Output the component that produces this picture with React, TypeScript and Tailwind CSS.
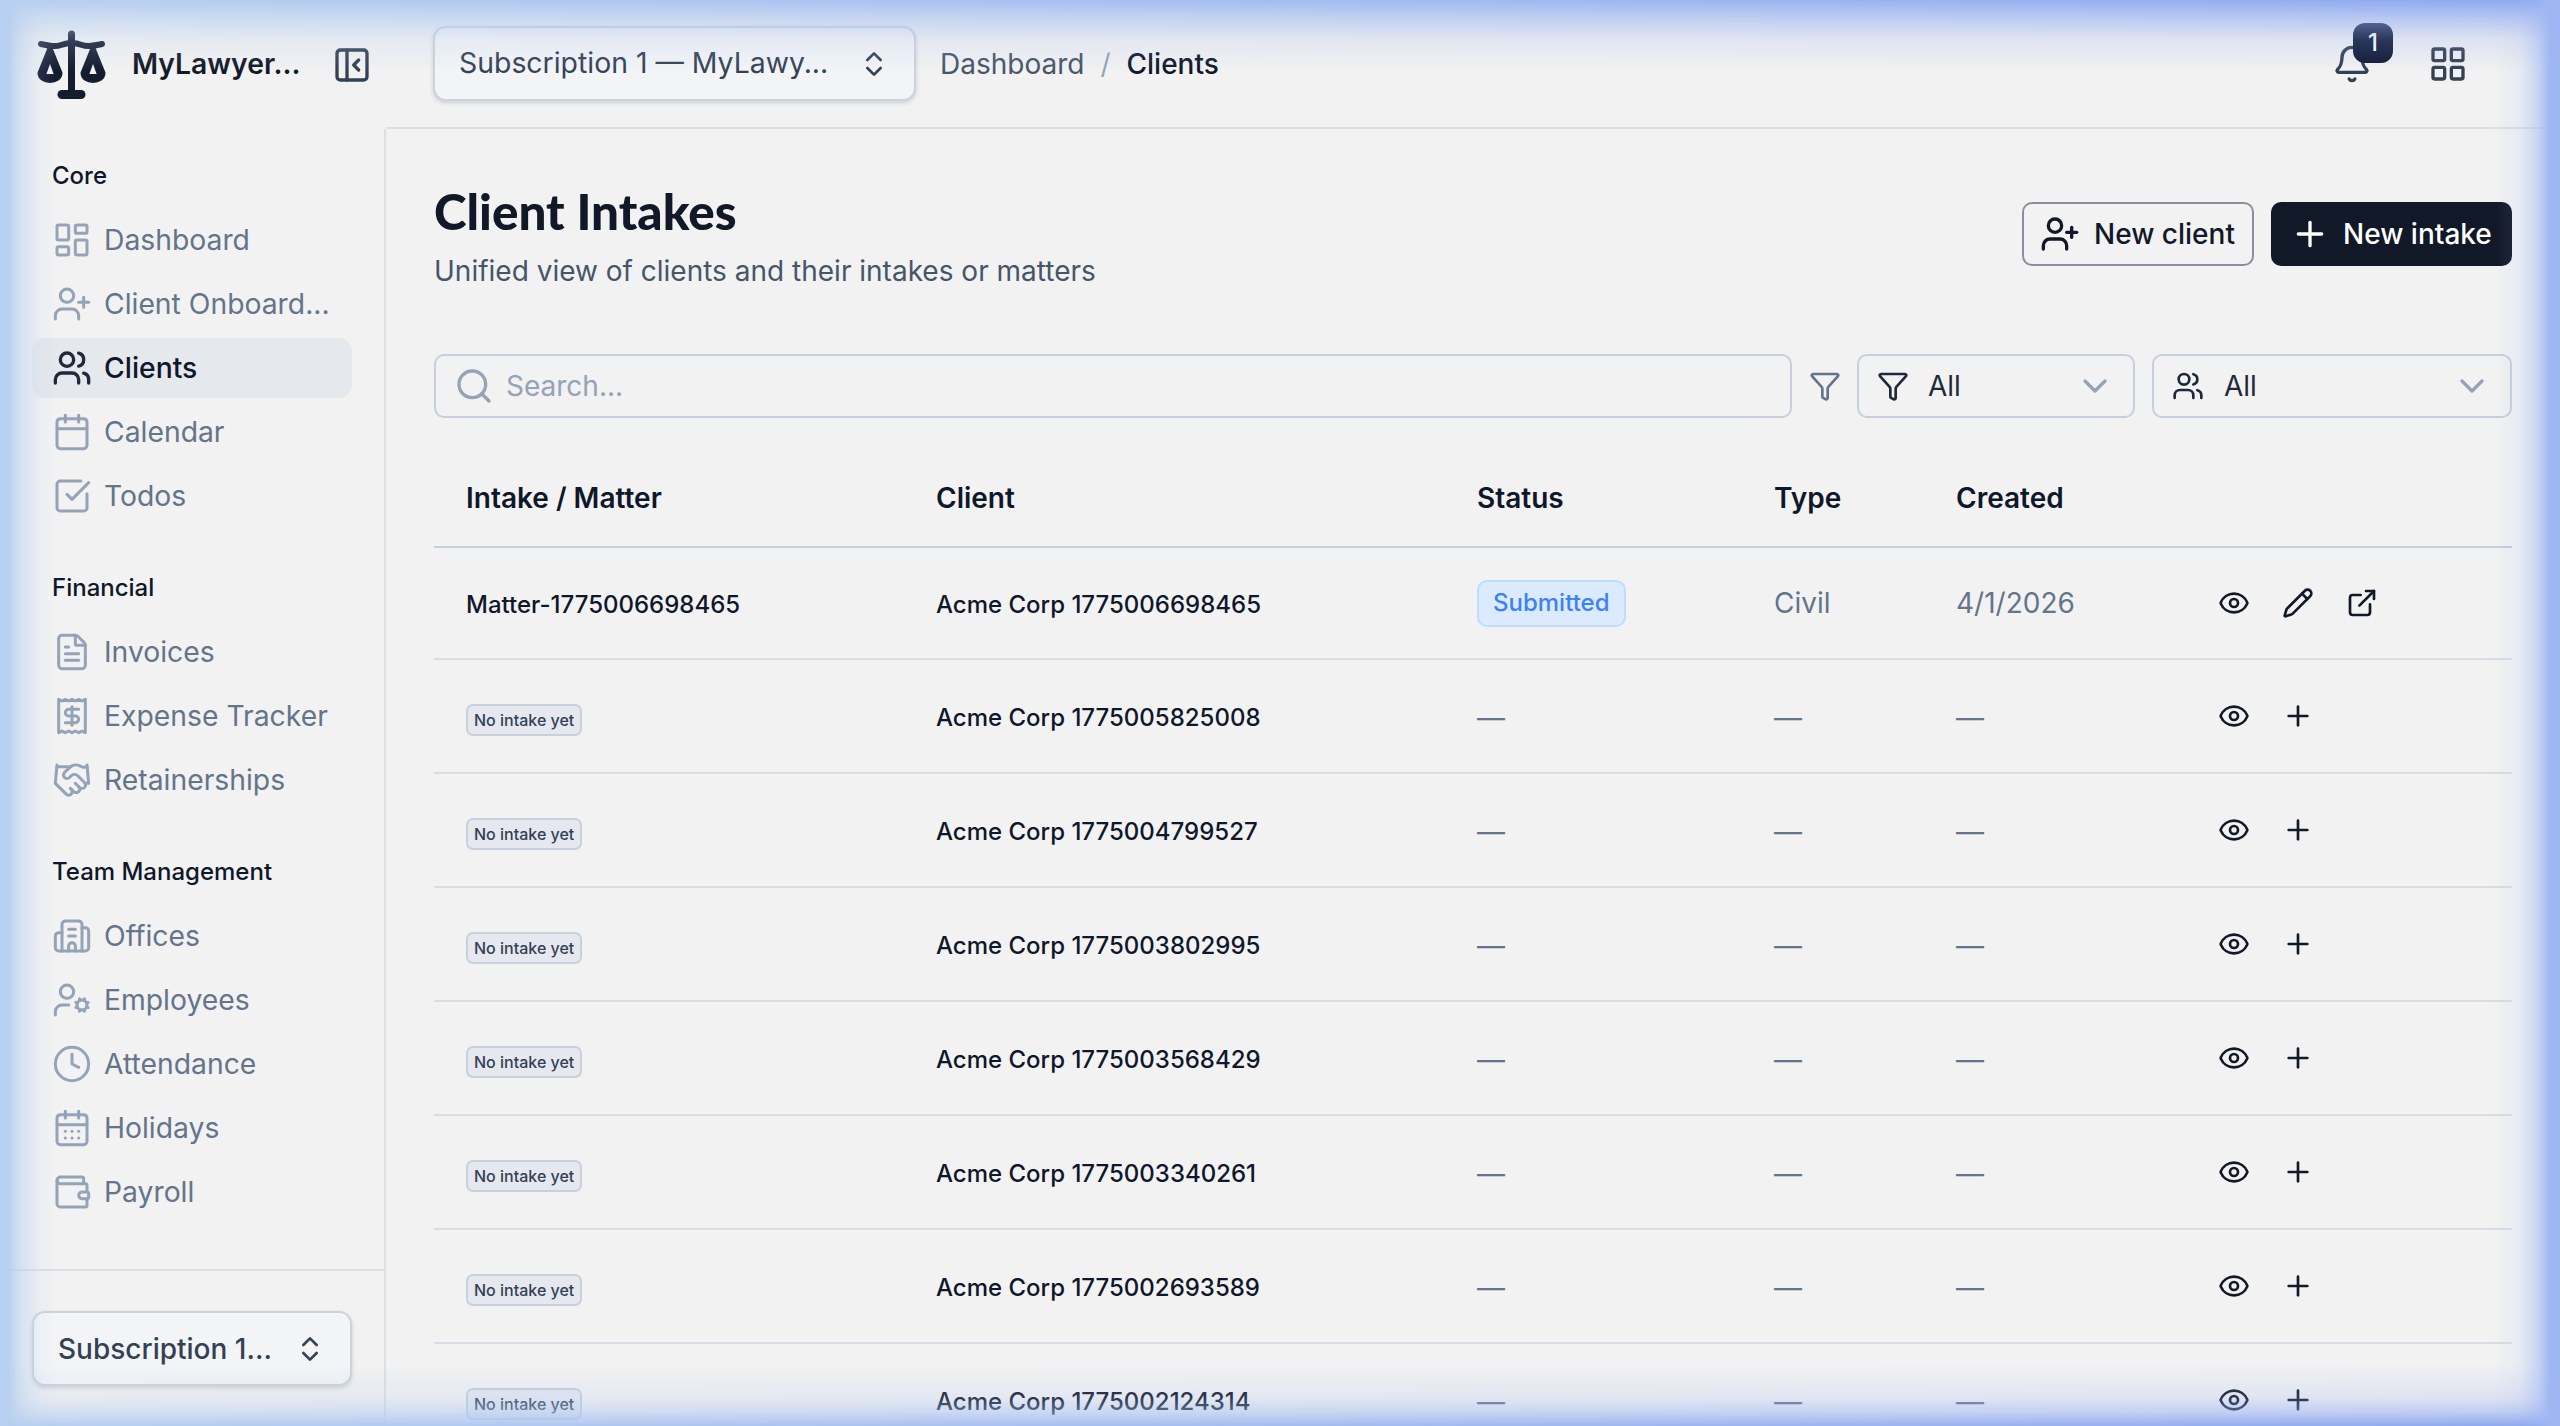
import type { ReactNode } from "react";
import {
  Bell,
  Building2,
  Calendar,
  CalendarDays,
  ChevronDown,
  ChevronsUpDown,
  Clock,
  ExternalLink,
  Eye,
  FileText,
  Funnel,
  Handshake,
  LayoutDashboard,
  LayoutGrid,
  PanelLeftClose,
  Pencil,
  Plus,
  Receipt,
  Search,
  SquareCheckBig,
  UserCog,
  UserPlus,
  Users,
  Wallet,
  type LucideIcon,
} from "lucide-react";

type NavItem = { label: string; icon: LucideIcon; active?: boolean };

const navGroups: { title: string; items: NavItem[] }[] = [
  {
    title: "Core",
    items: [
      { label: "Dashboard", icon: LayoutDashboard },
      { label: "Client Onboard...", icon: UserPlus },
      { label: "Clients", icon: Users, active: true },
      { label: "Calendar", icon: Calendar },
      { label: "Todos", icon: SquareCheckBig },
    ],
  },
  {
    title: "Financial",
    items: [
      { label: "Invoices", icon: FileText },
      { label: "Expense Tracker", icon: Receipt },
      { label: "Retainerships", icon: Handshake },
    ],
  },
  {
    title: "Team Management",
    items: [
      { label: "Offices", icon: Building2 },
      { label: "Employees", icon: UserCog },
      { label: "Attendance", icon: Clock },
      { label: "Holidays", icon: CalendarDays },
      { label: "Payroll", icon: Wallet },
    ],
  },
];

const emptyClients = [
  "Acme Corp 1775005825008",
  "Acme Corp 1775004799527",
  "Acme Corp 1775003802995",
  "Acme Corp 1775003568429",
  "Acme Corp 1775003340261",
  "Acme Corp 1775002693589",
  "Acme Corp 1775002124314",
];

function ScalesLogo() {
  return (
    <svg width="72" height="72" viewBox="0 0 72 72" className="text-[#141c30]" fill="none" stroke="currentColor" strokeLinecap="round" strokeLinejoin="round">
      <path d="M35.5 5v58" strokeWidth="7" />
      <path d="M26 65.5h19" strokeWidth="9" />
      <path d="M5 15c9 2 14 3 20 1s7-2 10.5-2 5 0 10.5 2 11 1 20-1" strokeWidth="6" />
      <path d="M14 18 3.5 44c0 5 5 8 10.5 8s10.5-3 10.5-8Z M14 29 7.5 47h13Z" fill="currentColor" fillRule="evenodd" strokeWidth="4" />
      <path d="M57 18 46.5 44c0 5 5 8 10.5 8s10.5-3 10.5-8Z M57 29 50.5 47h13Z" fill="currentColor" fillRule="evenodd" strokeWidth="4" />
    </svg>
  );
}

function SelectButton({ children, className }: { children: ReactNode; className: string }) {
  return (
    <button className={`flex items-center justify-between rounded-[13px] border-2 border-[#cdd3de] bg-[#f3f4f6] text-[#334155] shadow-[0_2px_4px_rgba(15,23,42,0.16)] ${className}`}>
      {children}
    </button>
  );
}

function Sidebar() {
  return (
    <aside className="flex w-[386px] shrink-0 flex-col">
      <div className="flex h-[129px] shrink-0 items-center pl-[36px]">
        <ScalesLogo />
        <span className="ml-[24px] text-[28.3px] font-semibold text-[#111827]">MyLawyer...</span>
        <PanelLeftClose size={40} className="ml-auto mr-[14px] text-[#334155]" />
      </div>
      <div className="flex min-h-0 flex-1 flex-col border-r-2 border-[#dcdfe6]">
        <nav className="flex-1 px-[32px] pt-[27px]">
          {navGroups.map((group) => (
            <div key={group.title} className="mb-[42px]">
              <div className="flex h-[40px] items-center pl-[20px] text-[24px] font-medium text-[#0f172a]">{group.title}</div>
              <ul className="mt-[14px] flex flex-col gap-[4px]">
                {group.items.map((item) => (
                  <li
                    key={item.label}
                    className={`flex h-[60px] items-center gap-[12px] rounded-[13px] pl-[20px] text-[28.3px] ${
                      item.active ? "bg-[#e5e8ec] font-medium text-[#0f172a]" : "text-[#64748b]"
                    }`}
                  >
                    <item.icon size={40} strokeWidth={item.active ? 2 : 1.8} className={item.active ? "text-[#1e293b]" : "text-[#94a3b8]"} />
                    <span>{item.label}</span>
                  </li>
                ))}
              </ul>
            </div>
          ))}
        </nav>
        <div className="shrink-0 border-t-2 border-[#dcdfe6] px-[32px] pb-[40px] pt-[40px]">
          <SelectButton className="h-[75px] w-full pl-[24px] pr-[24px] text-[28px] font-medium">
            <span>Subscription 1...</span>
            <ChevronsUpDown size={32} />
          </SelectButton>
        </div>
      </div>
    </aside>
  );
}

function Header() {
  return (
    <header className="flex h-[129px] shrink-0 items-center border-b-2 border-[#dcdfe6] pl-[47px] pr-[48px]">
      <SelectButton className="h-[75px] w-[483px] pl-[24px] pr-[24px] text-[28.4px]">
        <span>Subscription 1 — MyLawy...</span>
        <ChevronsUpDown size={32} />
      </SelectButton>
      <div className="ml-[24px] flex items-center text-[28px] text-[#475569]">
        <span>Dashboard</span>
        <span className="mx-[16px] text-[#94a3b8]">/</span>
        <span className="font-medium text-[#0f172a]">Clients</span>
      </div>
      <div className="relative ml-auto flex items-center gap-[56px] pr-[44px]">
        <div className="relative">
          <Bell size={40} className="text-[#334155]" />
          <span className="absolute left-[21px] top-[-21px] flex h-[40px] w-[40px] items-center justify-center rounded-[12px] bg-[#111a33] text-[24px] font-medium text-white">1</span>
        </div>
        <LayoutGrid size={40} className="text-[#334155]" />
      </div>
    </header>
  );
}

function ActionIcons({ children }: { children: ReactNode }) {
  return (
    <div className="flex items-center gap-[32px] text-[#111827]">
      <Eye size={32} />
      {children}
    </div>
  );
}

const cellBase = "px-[32px] align-middle";
const textCell = "px-[32px] pt-[3px] align-middle";
const dashCell = "px-[32px] pt-[3px] align-middle text-[28px] font-normal text-[#64748b]";

function ClientsTable() {
  return (
    <table className="w-full table-fixed border-collapse text-[24px] font-medium">
      <colgroup>
        <col className="w-[470px]" />
        <col className="w-[541px]" />
        <col className="w-[297px]" />
        <col className="w-[182px]" />
        <col className="w-[262px]" />
        <col />
      </colgroup>
      <thead>
        <tr className="h-[98px] border-b-2 border-[#c6cfdc] text-left text-[28px] font-semibold text-[#0f172a]">
          <th className={`${cellBase} font-semibold`}>Intake / Matter</th>
          <th className={`${cellBase} font-semibold`}>Client</th>
          <th className={`${cellBase} font-semibold`}>Status</th>
          <th className={`${cellBase} font-semibold`}>Type</th>
          <th className={`${cellBase} font-semibold`}>Created</th>
          <th />
        </tr>
      </thead>
      <tbody className="text-[#0f172a]">
        <tr className="h-[112px] border-b-2 border-[#d8dde6]">
          <td className={textCell}>Matter-1775006698465</td>
          <td className={textCell}>Acme Corp 1775006698465</td>
          <td className={cellBase}>
            <span className="inline-flex h-[47px] items-center rounded-[10px] border-2 border-[#bfdbfe] bg-[#dbeafe] px-[14px] text-[24px] font-medium text-[#3b82f6]">Submitted</span>
          </td>
          <td className={`${cellBase} text-[28px] font-normal text-[#64748b]`}>Civil</td>
          <td className={`${cellBase} text-[28px] font-normal text-[#64748b]`}>4/1/2026</td>
          <td className="px-[32px]">
            <ActionIcons>
              <Pencil size={32} />
              <ExternalLink size={32} />
            </ActionIcons>
          </td>
        </tr>
        {emptyClients.map((name) => (
          <tr key={name} className="h-[114px] border-b-2 border-[#d8dde6]">
            <td className={textCell}>
              <span className="inline-flex h-[32px] items-center rounded-[7px] border-2 border-[#c8d0dc] bg-[#e5e9ef] px-[6px] text-[16px] font-medium text-[#334155]">No intake yet</span>
            </td>
            <td className={textCell}>{name}</td>
            <td className={dashCell}>—</td>
            <td className={dashCell}>—</td>
            <td className={dashCell}>—</td>
            <td className="px-[32px]">
              <ActionIcons>
                <Plus size={32} />
              </ActionIcons>
            </td>
          </tr>
        ))}
      </tbody>
    </table>
  );
}

function Main() {
  return (
    <main className="min-h-0 flex-1 overflow-hidden px-[48px] pt-[50px]">
      <div className="flex items-start justify-between">
        <div>
          <h1 className="font-['Lato',sans-serif] text-[49.4px] font-black leading-[64px] text-[#111827]">Client Intakes</h1>
          <p className="mt-[8px] text-[28px] leading-[40px] text-[#475569]">Unified view of clients and their intakes or matters</p>
        </div>
        <div className="mt-[23px] flex items-center gap-[17px]">
          <button className="flex h-[64px] w-[232px] items-center gap-[14px] rounded-[10px] border-2 border-[#8a8f9c] pl-[16px] text-[28px] font-medium text-[#111827]">
            <UserPlus size={40} />
            New client
          </button>
          <button className="flex h-[64px] w-[241px] items-center gap-[13px] rounded-[10px] bg-[#111827] pl-[19px] text-[28px] font-medium text-white">
            <Plus size={40} />
            New intake
          </button>
        </div>
      </div>

      <div className="mt-[63px] flex h-[64px] items-stretch">
        <div className="flex flex-1 items-center gap-[12px] rounded-[10px] border-2 border-[#c6cfdc] pl-[18px] text-[28px] text-[#94a3b8]">
          <Search size={40} />
          Search...
        </div>
        <div className="flex w-[65px] items-center justify-center text-[#64748b]">
          <Funnel size={32} />
        </div>
        <div className="flex w-[278px] items-center gap-[19px] rounded-[10px] border-2 border-[#c6cfdc] px-[18px] text-[28px] text-[#1e293b]">
          <Funnel size={32} />
          All
          <ChevronDown size={40} className="ml-auto text-[#94a3b8]" />
        </div>
        <div className="ml-[17px] flex w-[360px] items-center gap-[20px] rounded-[10px] border-2 border-[#c6cfdc] px-[18px] text-[28px] text-[#1e293b]">
          <Users size={32} />
          All
          <ChevronDown size={40} className="ml-auto text-[#94a3b8]" />
        </div>
      </div>

      <div className="mt-[31px]">
        <ClientsTable />
      </div>
    </main>
  );
}

function EdgeGlow() {
  return (
    <div className="pointer-events-none fixed inset-0 z-20">
      <div className="absolute inset-x-0 top-0 h-[72px] bg-[linear-gradient(to_right,#b7cff0,#8ea8f0)] [mask-image:linear-gradient(to_bottom,#000,rgba(0,0,0,0.6)_18px,rgba(0,0,0,0.2)_40px,transparent)]" />
      <div className="absolute inset-x-0 bottom-0 h-[62px] bg-[linear-gradient(to_right,#b7cff0,#8ea8f0)] [mask-image:linear-gradient(to_top,#000,rgba(0,0,0,0.5)_14px,rgba(0,0,0,0.2)_28px,transparent)]" />
      <div className="absolute inset-y-0 left-0 w-[56px] bg-[#b7cff0] [mask-image:linear-gradient(to_right,#000,#000_8px,rgba(0,0,0,0.5)_20px,rgba(0,0,0,0.1)_40px,transparent)]" />
      <div className="absolute inset-y-0 right-0 w-[66px] bg-[#9fb6f2] [mask-image:linear-gradient(to_left,#000,#000_10px,rgba(0,0,0,0.5)_22px,rgba(0,0,0,0.12)_40px,transparent)]" />
    </div>
  );
}

export default function App() {
  return (
    <div className="relative flex h-screen overflow-hidden bg-[#f2f2f2] font-['Inter',sans-serif]">
      <Sidebar />
      <div className="flex min-w-0 flex-1 flex-col">
        <Header />
        <Main />
      </div>
      <EdgeGlow />
    </div>
  );
}
